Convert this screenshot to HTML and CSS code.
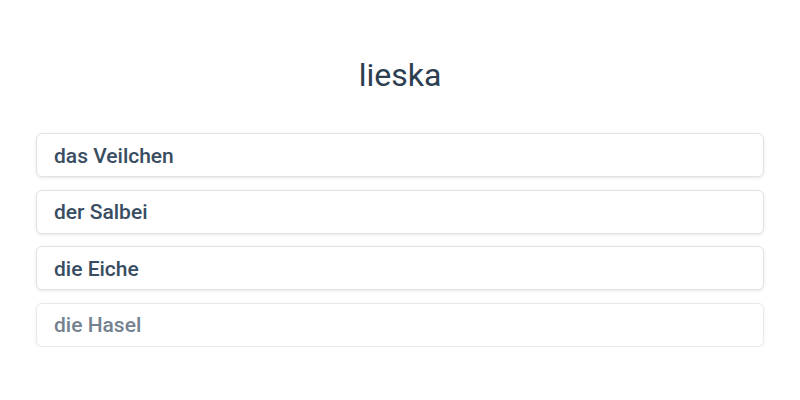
FILE: index.html
```html
<!DOCTYPE html>
<html lang="fi">
<head>
  <meta charset="UTF-8" />
  <meta name="viewport" content="width=device-width, initial-scale=1.0" />
  <title>lieska</title>
  <link rel="stylesheet" href="styles.css">
</head>
<body>
  <div class="quiz">
    <h1 class="word">lieska</h1>
    <ul class="choices">
      <li class="choice">das Veilchen</li>
      <li class="choice">der Salbei</li>
      <li class="choice">die Eiche</li>
      <li class="choice faded">die Hasel</li>
    </ul>
  </div>
</body>
</html>
```

FILE: styles.css
```css
* {
  margin: 0;
  padding: 0;
  box-sizing: border-box;
}
body {
  font-family: Roboto, 'Noto Sans', sans-serif;
  color: #2c3e50;
  background: #ffffff;
}
.quiz {
  padding: 55px 36px 0;
}
.word {
  font-size: 32px;
  font-weight: 400;
  text-align: center;
  line-height: 40px;
  margin-bottom: 38px;
}
.choices {
  list-style: none;
  display: flex;
  flex-direction: column;
  gap: 12.5px;
}
.choice {
  height: 44px;
  display: flex;
  align-items: center;
  padding: 1px 0 0 17px;
  font-size: 21px;
  font-weight: 500;
  color: #384d62;
  border: 1px solid #e2e2e2;
  border-radius: 6px;
  box-shadow: 0 1px 3px rgba(0, 0, 0, 0.1);
}
.choice.faded {
  opacity: 0.7;
}
```
